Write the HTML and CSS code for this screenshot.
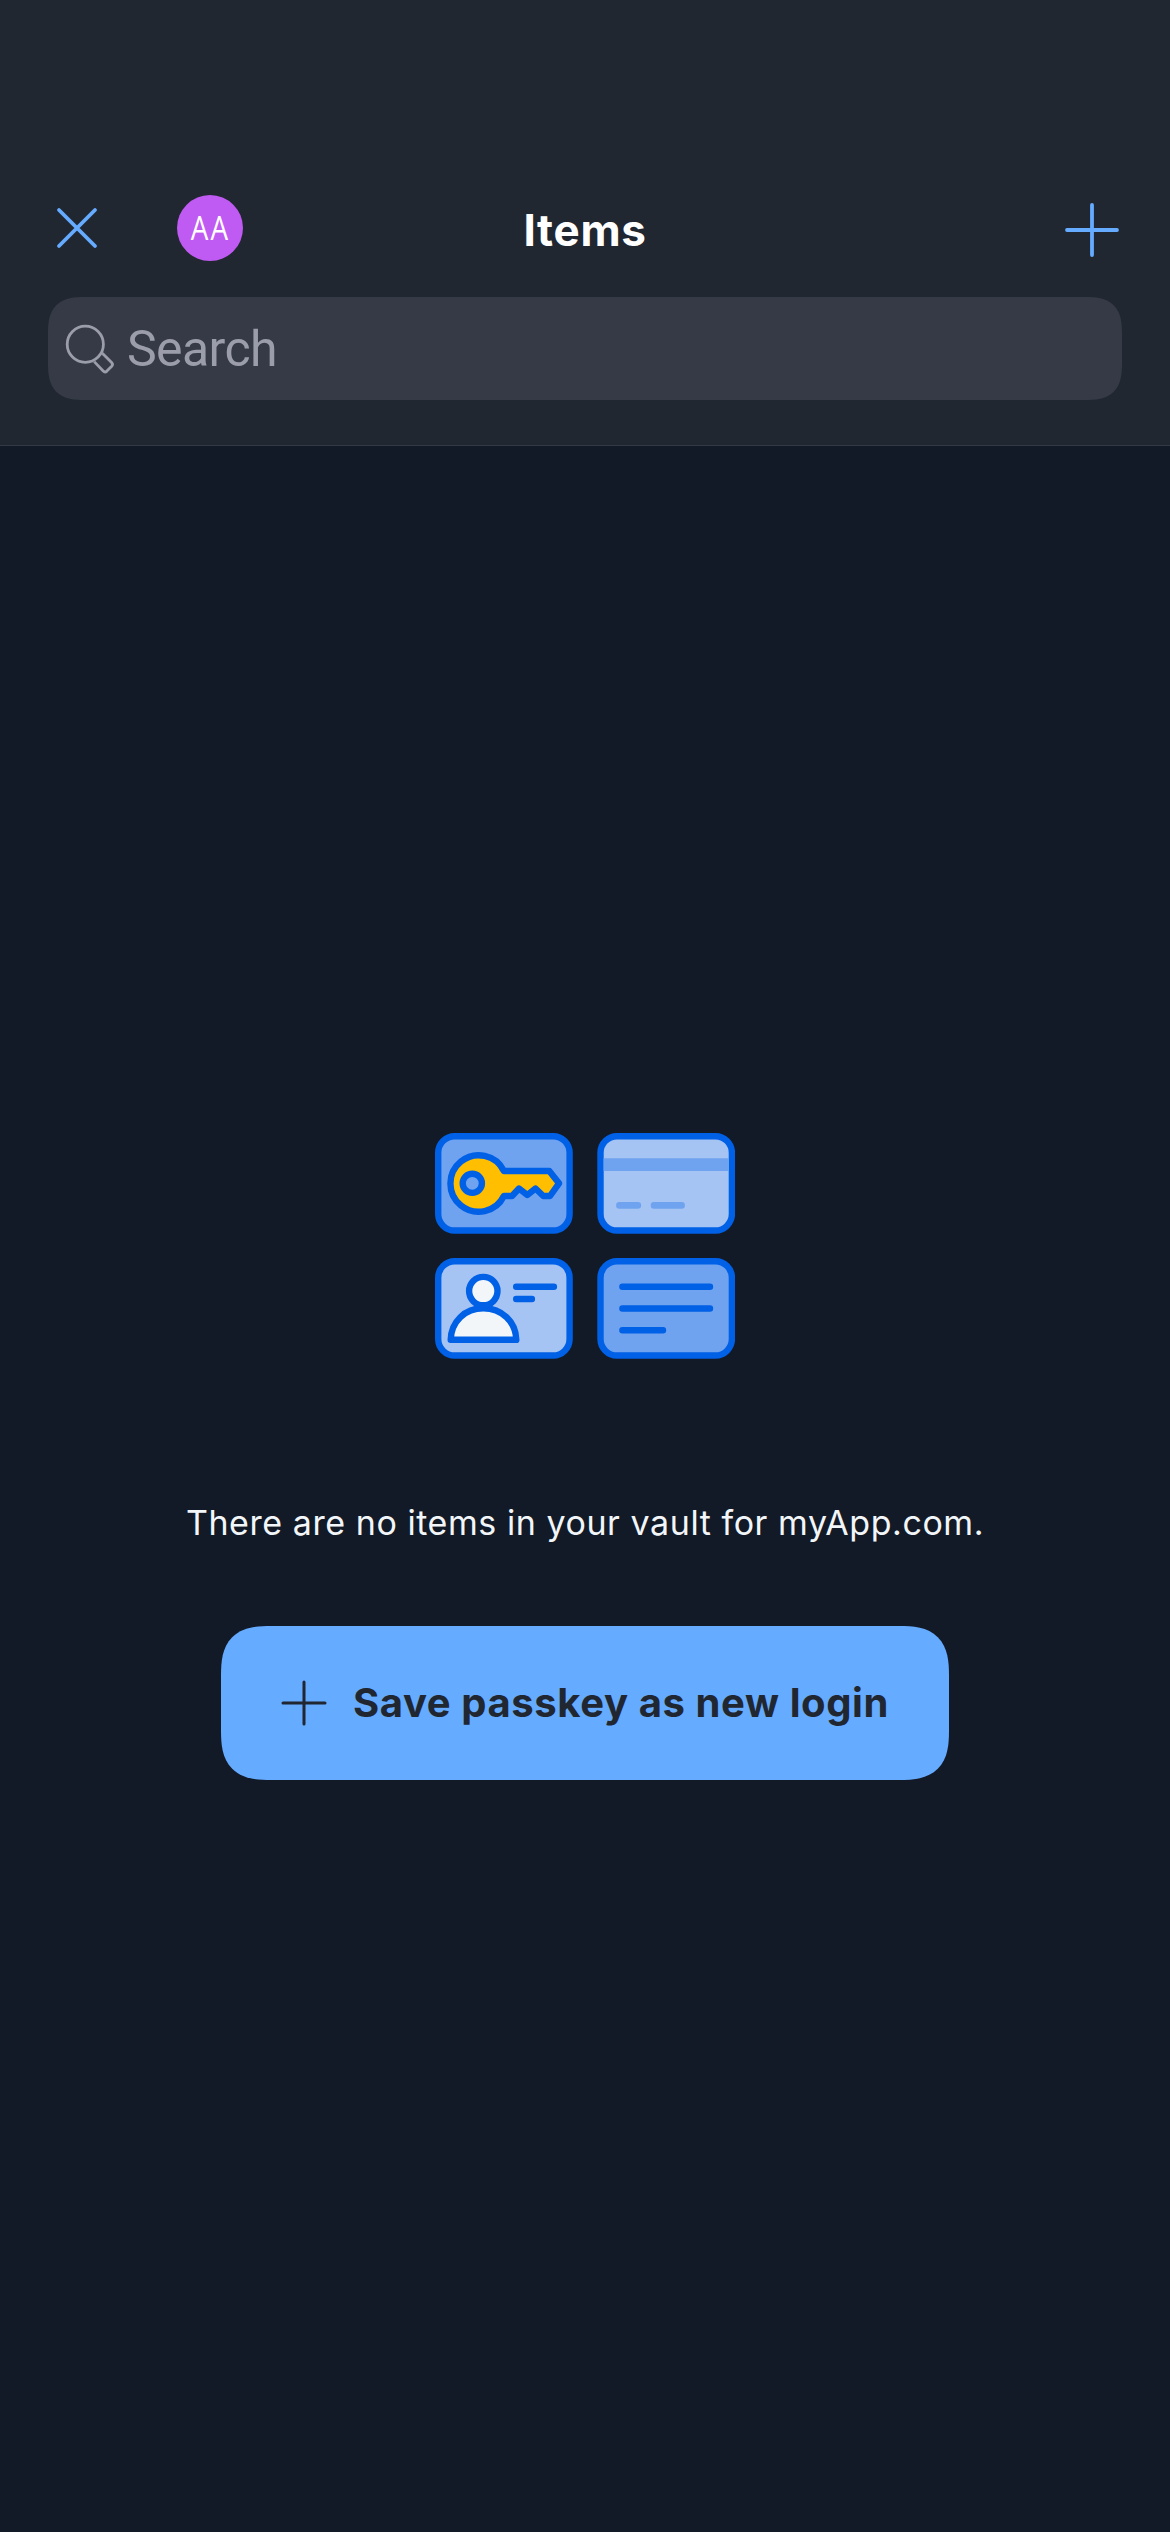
FILE: index.html
```html
<!DOCTYPE html>
<html lang="en">
<head>
<meta charset="utf-8">
<title>Items</title>
<link rel="stylesheet" href="styles.css">
</head>
<body>
<header class="header">
  <nav class="nav">
    <div class="nav-left">
      <svg class="close" width="42" height="42" viewBox="0 0 42 42"><path d="M3 3l36 36M39 3L3 39"/></svg>
      <div class="avatar"><span class="initials">AA</span></div>
    </div>
    <h1 class="title">Items</h1>
    <svg class="add" width="56" height="56" viewBox="0 0 56 56"><path d="M28 3v50M3 28h50"/></svg>
  </nav>
  <div class="search">
    <svg class="search-icon" width="52" height="52" viewBox="0 0 52 52">
      <circle cx="21.3" cy="21.3" r="18.1"/>
      <path d="M38.3 30.2L47.6 39.5Q49.4 41.4 47.7 43.3L42.9 48.1Q41 49.8 39.2 48L30.2 38.6"/>
    </svg>
    <span class="search-label">Search</span>
  </div>
</header>
<main class="content">
  <svg class="illustration" width="300" height="226" viewBox="0 0 300 226">
    <g class="outline">
      <rect class="mid" x="3.2" y="3.2" width="131.4" height="94.3" rx="16.5"/>
      <rect class="light" x="165.5" y="3.2" width="131.4" height="94.3" rx="16.5"/>
      <rect class="light" x="3.2" y="128.2" width="131.4" height="94.3" rx="16.5"/>
      <rect class="mid" x="165.5" y="128.2" width="131.4" height="94.3" rx="16.5"/>
      <path class="gold" d="M68.9 38H114.3L124 50.3L115 63H108.3L100.5 55.5L92.3 62L84 55.5L77 63H68.9A28.2 28.2 0 1 1 68.9 38Z"/>
      <circle class="mid" cx="37.3" cy="50.3" r="9.6"/>
      <path class="white" d="M15.7 206.8C16.2 188.5 30 175.3 48.3 175.3S80.8 188.5 81.3 206.8Z"/>
      <circle class="white" cx="48.3" cy="158.1" r="14.2"/>
      <path d="M81.2 153.7H118.9M81.2 166H96.9M187.4 153.7H275M187.4 175.5H275M187.4 197.3H228"/>
    </g>
    <path class="stripe" d="M168.6 25.3h125.2v12.6H168.6z"/>
    <path class="dash" d="M184.4 72.4h18.4M219 72.4h27.6"/>
  </svg>
  <p class="message">There are no items in your vault for myApp.com.</p>
  <button class="save">
    <svg width="46" height="46" viewBox="0 0 46 46"><path d="M23 2v42M2 23h42"/></svg>
    <span>Save passkey as new login</span>
  </button>
</main>
</body>
</html>
```
FILE: styles.css
```css
* { box-sizing: border-box; }

body {
  margin: 0;
  min-height: 2532px;
  background: #121a27;
  font-family: Inter, "Liberation Sans", sans-serif;
}

.header {
  height: 446px;
  padding: 195px 48px 0;
  background: #212731;
  border-bottom: 1px solid #333a46;
}

.nav {
  display: grid;
  grid-template-columns: 1fr auto 1fr;
  align-items: center;
  height: 66px;
}

.nav-left {
  display: flex;
  align-items: center;
  gap: 79px;
  padding-left: 8px;
}

.close, .add {
  fill: none;
  stroke: #65abff;
  stroke-width: 3.8;
  stroke-linecap: round;
}

.add {
  justify-self: end;
  margin: 4px 2px 0 0;
}

.avatar {
  display: flex;
  justify-content: center;
  width: 66px;
  height: 66px;
  border-radius: 50%;
  background: #bf5af2;
  color: #fff;
  font: 400 32px/66px "Open Sans", sans-serif;
}

.initials {
  padding-left: 2px;
  letter-spacing: 2.5px;
  transform: scaleX(0.87);
}

.title {
  margin: 4px 0 0;
  color: #fff;
  font-size: 44px;
  font-weight: 700;
  line-height: 60px;
  letter-spacing: 0.7px;
}

.search {
  display: flex;
  align-items: center;
  gap: 11px;
  height: 103px;
  margin-top: 36px;
  padding-left: 16px;
  border-radius: 28px;
  background: #353a46;
}

.search-icon {
  fill: none;
  stroke: #9c9dab;
  stroke-width: 2.8;
}

.search-label {
  margin-top: 1px;
  color: #9c9dab;
  font: 400 50px/60px Roboto, sans-serif;
  letter-spacing: -0.6px;
}

.content {
  display: flex;
  flex-direction: column;
  align-items: center;
  padding-top: 687px;
}

.outline {
  fill: none;
  stroke: #0060e6;
  stroke-width: 6.4;
  stroke-linecap: round;
  stroke-linejoin: round;
}

.mid { fill: #6fa3ef; }
.light { fill: #a5c4f3; }
.gold { fill: #ffbf00; }
.white { fill: #f3f6f9; }
.stripe { fill: #6fa3ef; }

.dash {
  fill: none;
  stroke: #6fa3ef;
  stroke-width: 6.6;
  stroke-linecap: round;
}

.message {
  margin: 139px 0 0;
  color: #f3f6f9;
  font-size: 34px;
  line-height: 50px;
  letter-spacing: 0.56px;
  white-space: nowrap;
}

.save {
  display: flex;
  align-items: center;
  gap: 26px;
  width: 728px;
  height: 154px;
  margin-top: 78px;
  padding: 0 0 0 60px;
  border: 0;
  border-radius: 40px;
  background: #65abff;
  color: #212731;
  font: 700 40px/50px Inter, "Liberation Sans", sans-serif;
  letter-spacing: 0.6px;
  white-space: nowrap;
}

.save svg {
  flex: none;
  fill: none;
  stroke: #212731;
  stroke-width: 3;
  stroke-linecap: round;
}

@supports (corner-shape: superellipse(1.5)) {
  .save {
    border-radius: 50px;
    corner-shape: superellipse(1.45);
  }

  .search {
    border-radius: 37px;
    corner-shape: superellipse(1.45);
  }
}
```
